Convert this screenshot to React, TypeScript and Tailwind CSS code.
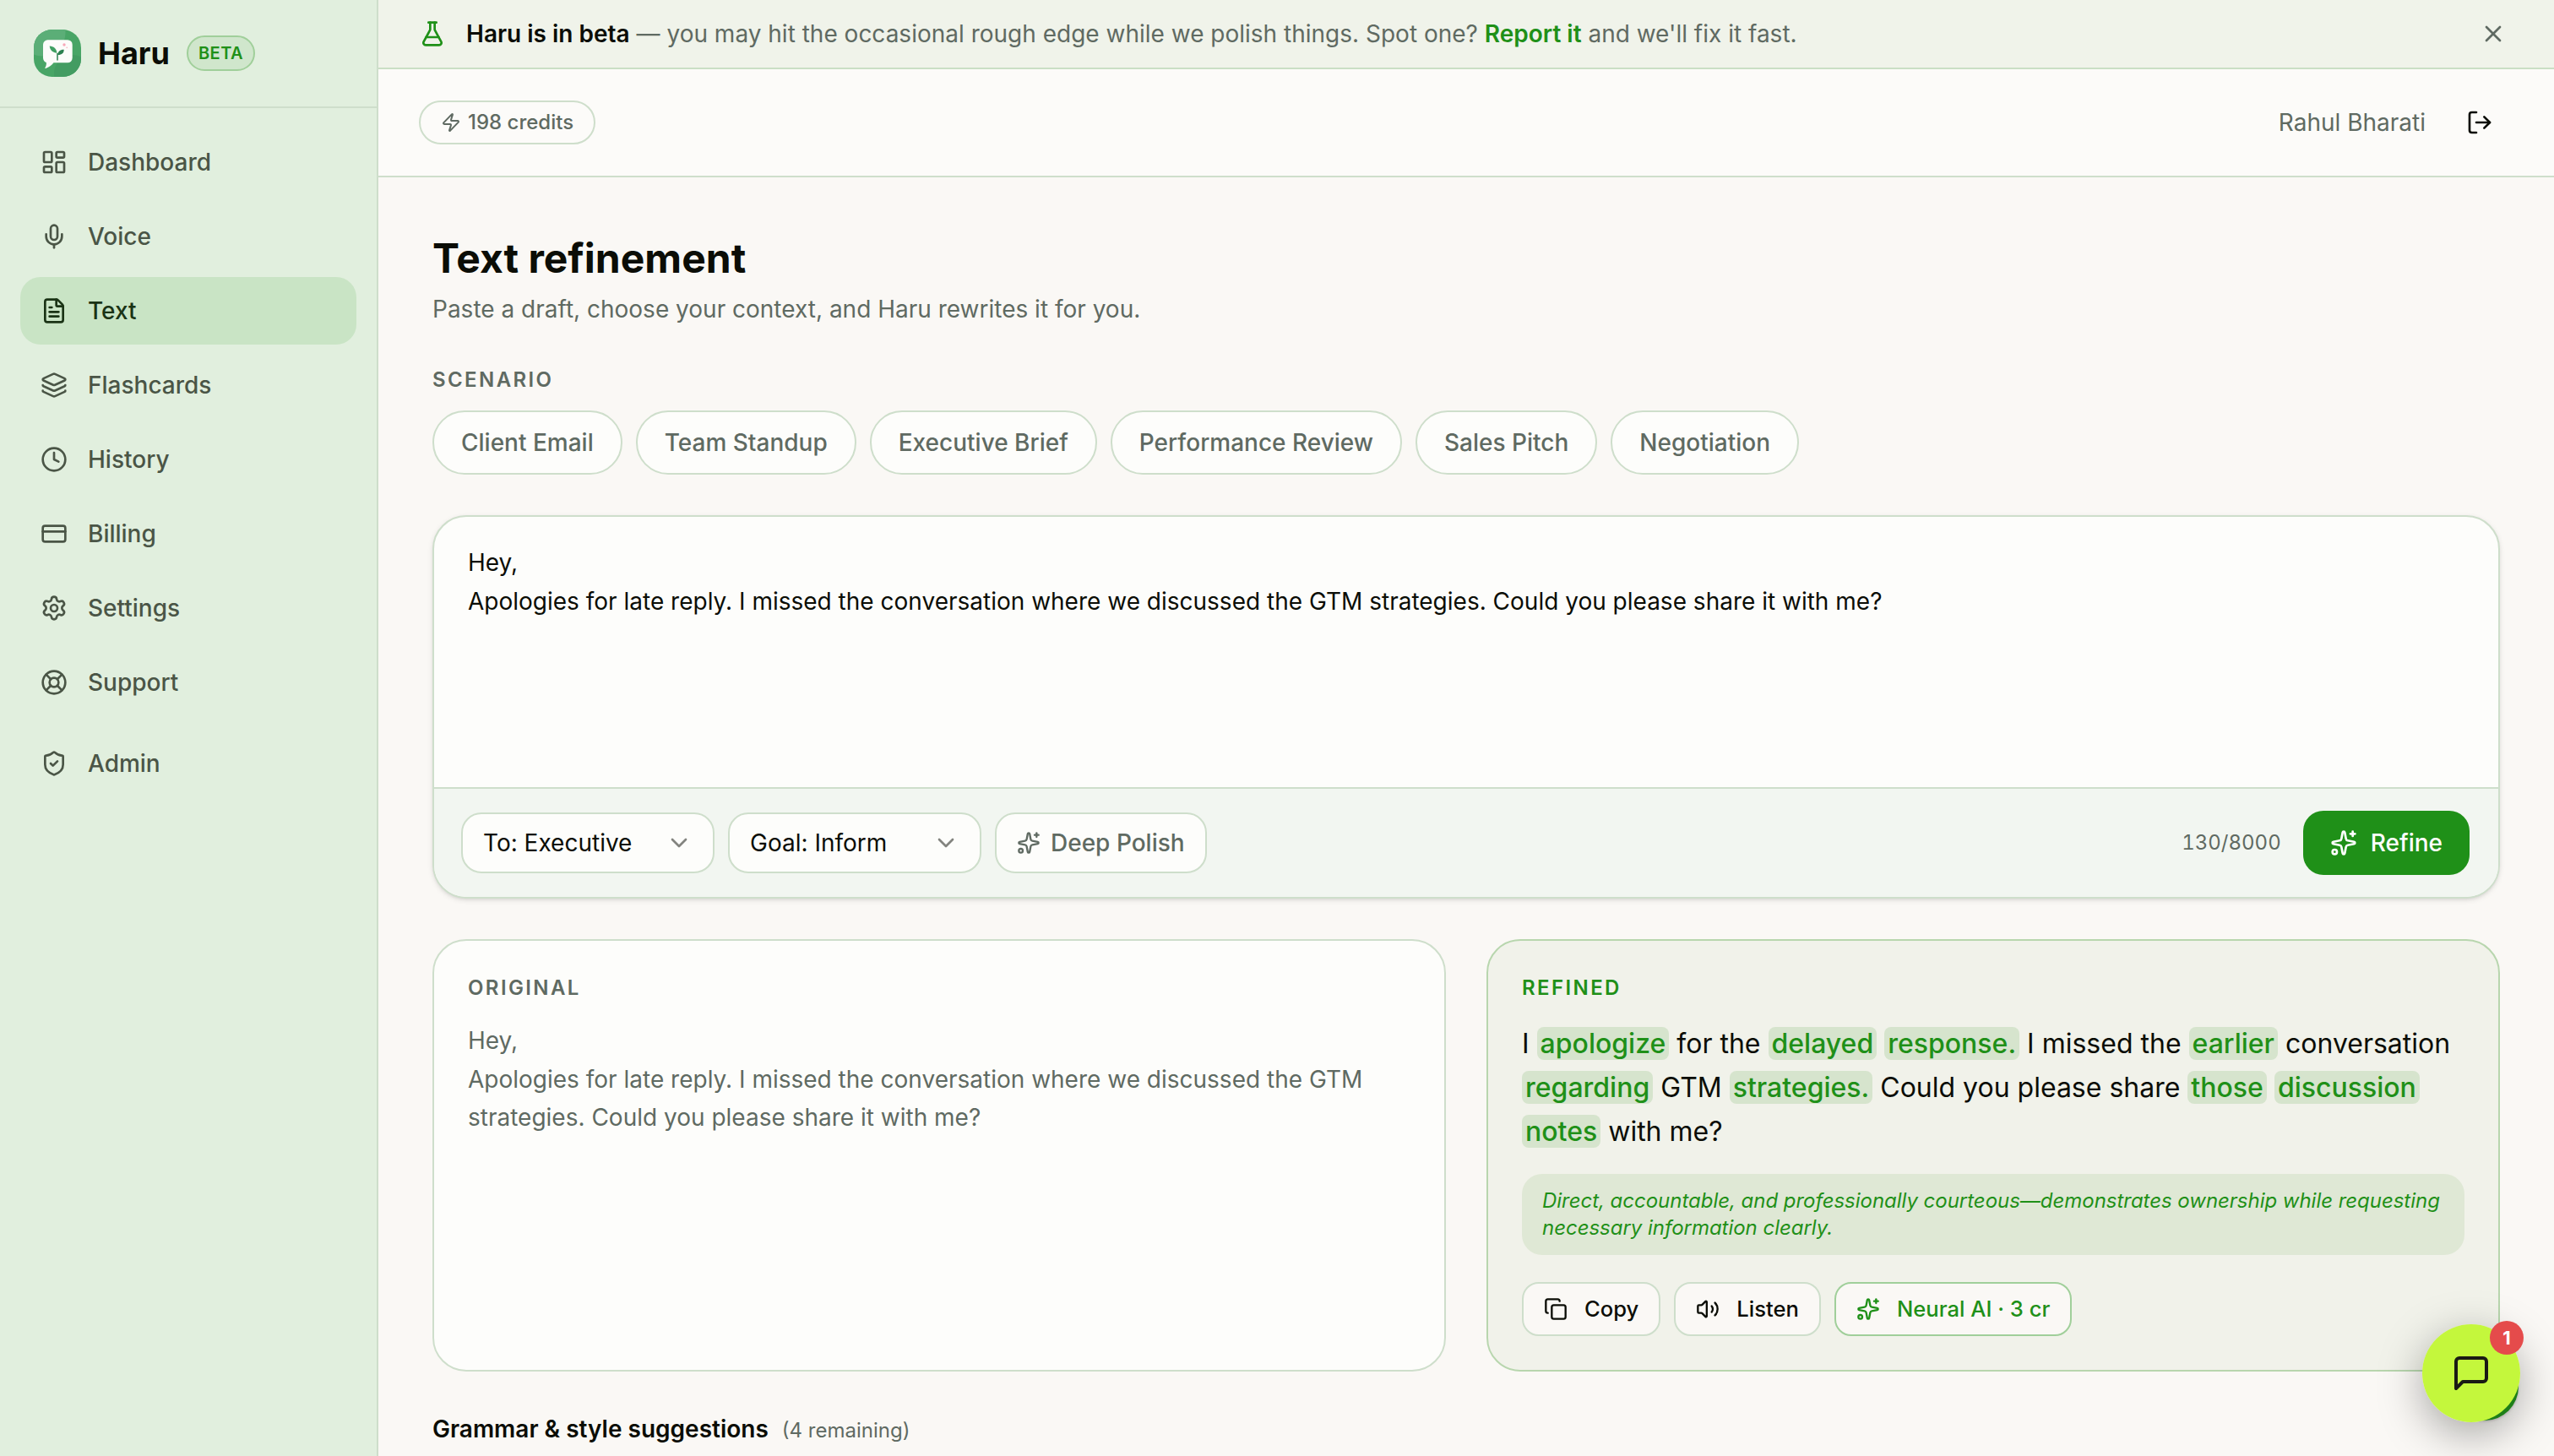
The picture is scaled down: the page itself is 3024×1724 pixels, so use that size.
import {
  Clock,
  Copy,
  ChevronDown,
  CreditCard,
  FileText,
  FlaskConical,
  Layers,
  LayoutDashboard,
  LifeBuoy,
  LogOut,
  Mic,
  Settings,
  ShieldCheck,
  Sparkles,
  Volume2,
  X,
  Zap,
  type LucideIcon,
} from "lucide-react";
import { clsx } from "clsx";

const NAV: { label: string; icon: LucideIcon; active?: boolean; spaced?: boolean }[] = [
  { label: "Dashboard", icon: LayoutDashboard },
  { label: "Voice", icon: Mic },
  { label: "Text", icon: FileText, active: true },
  { label: "Flashcards", icon: Layers },
  { label: "History", icon: Clock },
  { label: "Billing", icon: CreditCard },
  { label: "Settings", icon: Settings },
  { label: "Support", icon: LifeBuoy },
  { label: "Admin", icon: ShieldCheck, spaced: true },
];

const SCENARIOS = [
  "Client Email",
  "Team Standup",
  "Executive Brief",
  "Performance Review",
  "Sales Pitch",
  "Negotiation",
];

const DRAFT =
  "Hey,\nApologies for late reply. I missed the conversation where we discussed the GTM strategies. Could you please share it with me?";

// Words starting with * were changed by the rewrite
const REFINED =
  "I *apologize for the *delayed *response. I missed the *earlier conversation *regarding GTM *strategies. Could you please share *those *discussion *notes with me?";

/** Speech bubble with a sprout on a green tile. */
function Logo() {
  return (
    <svg viewBox="0 0 56 56" className="size-14">
      <clipPath id="logo-tile">
        <rect width="56" height="56" rx="21.5" />
      </clipPath>
      <g clipPath="url(#logo-tile)">
        <rect width="56" height="56" fill="#48a566" />
        <circle cx="10" cy="4" r="27.5" fill="#5bae77" />
        <circle cx="46" cy="52" r="22" fill="#439c62" />
      </g>
      <path
        d="M16.500 12.200H40a5.700 5.700 0 0 1 5.700 5.700v15.700a5.700 5.700 0 0 1-5.700 5.700H23.500c-2.400 3-5.600 5.400-9.400 6.700-.6.2-1-.3-.7-.8 1.200-1.900 1.700-4 1.400-6.200-2.300-.7-3.800-2.800-3.800-5.400V17.900a5.700 5.700 0 0 1 5.500-5.700Z"
        fill="#fcfcfa"
      />
      <path d="M28 36v-7.5" stroke="#2c8050" strokeWidth="1.5" strokeLinecap="round" />
      <path d="M18.700 19.500c4.800.2 8.300 3 8.700 8.300-4.700-.5-8.200-3-8.700-8.300Z" fill="#3f9f62" />
      <path d="M35.700 23.800c.2 3.900-2.700 6.500-7.400 6.300-.1-3.900 2.800-6.400 7.400-6.300Z" fill="#2c8050" />
      <circle cx="36" cy="18" r="1.7" fill="#f7a8b8" />
      <circle cx="39.2" cy="21.3" r=".9" fill="#f9bcc8" />
    </svg>
  );
}

function Sidebar() {
  return (
    <aside className="flex w-[448px] shrink-0 flex-col border-r-2 border-[#cedecb] bg-[#e1efde]">
      <div className="flex h-32 items-center border-b-2 border-[#cedecb] px-10">
        <Logo />
        <span className="ml-5 text-[36px] font-bold">Haru</span>
        <span className="ml-5 rounded-full border-2 border-[#a0cf9a] bg-[#d0e6cc] px-3 py-1 text-[20px] leading-[30px] font-semibold tracking-wide text-[#1f9018]">
          BETA
        </span>
      </div>
      <nav className="flex flex-col gap-2 p-6">
        {NAV.map(({ label, icon: Icon, active, spaced }) => (
          <a
            key={label}
            className={clsx(
              "flex h-20 items-center gap-6 rounded-[24px] px-6 font-medium",
              active ? "bg-[#c9e4c5] text-[#1a3315]" : "text-[#4a5546]",
              spaced && "mt-2",
            )}
          >
            <Icon size={32} />
            {label}
          </a>
        ))}
      </nav>
    </aside>
  );
}

function BetaBanner() {
  return (
    <div className="flex h-[82px] items-center border-b-2 border-[#cadfc5] bg-[#f0f3ea] px-12">
      <FlaskConical size={32} className="text-[#1f9018]" />
      <p className="ml-6 flex-1 text-[#5f6a62]">
        <strong className="font-semibold text-[#0b0d06]">Haru is in beta</strong> — you may hit the
        occasional rough edge while we polish things. Spot one?{" "}
        <a className="font-semibold text-[#1f9018]">Report it</a> and we'll fix it fast.
      </p>
      <button className="p-2 text-[#5f6a62]">
        <X size={32} />
      </button>
    </div>
  );
}

function TopBar() {
  return (
    <header className="flex h-32 items-center justify-between border-b-2 border-[#cedecb] bg-[#fcfbf9] px-12">
      <span className="flex items-center gap-2 rounded-full border-2 border-[#cedecb] px-6 py-2 text-[24px] leading-8 font-medium text-[#5f6a62]">
        <Zap size={24} />
        198 credits
      </span>
      <div className="flex items-center gap-6">
        <span className="text-[#5f6a62]">Rahul Bharati</span>
        <button className="px-6">
          <LogOut size={32} />
        </button>
      </div>
    </header>
  );
}

function Select({ value }: { value: string }) {
  return (
    <button className="flex h-[72px] w-[300px] items-center justify-between rounded-[24px] border-2 border-[#cedecb] bg-[#fdfdfb] px-6">
      {value}
      <ChevronDown size={32} className="opacity-50" />
    </button>
  );
}

function Composer() {
  return (
    <section className="mt-12 overflow-hidden rounded-[40px] border-2 border-[#cedecb] bg-[#fdfdfb] shadow-[0_2px_6px_rgba(0,0,0,0.1),0_2px_4px_-2px_rgba(0,0,0,0.1)]">
      <div className="h-80 px-10 py-8 leading-[45.5px] whitespace-pre-line">{DRAFT}</div>
      <div className="flex h-[130px] items-center gap-4 border-t-2 border-[#cedecb] bg-[#f2f6f1] pr-[34px] pl-8">
        <Select value="To: Executive" />
        <Select value="Goal: Inform" />
        <button className="flex h-[72px] items-center gap-3 rounded-[24px] border-2 border-[#cedecb] bg-[#fdfdfb] px-6 font-medium text-[#5f6a62]">
          <Sparkles size={28} />
          Deep Polish
        </button>
        <span className="ml-auto text-[24px] text-[#5f6a62] tabular-nums">130/8000</span>
        <button className="ml-2.5 flex h-[76px] items-center gap-4 rounded-[24px] bg-[#1f9018] px-8 font-medium text-white">
          <Sparkles size={32} />
          Refine
        </button>
      </div>
    </section>
  );
}

function RefinedText() {
  return (
    <p className="mt-6 text-[32px] leading-[52px]">
      {REFINED.split(" ").map((word, i) => (
        <span key={i}>
          {word.startsWith("*") ? (
            <mark className="rounded-lg bg-[#d6e4cd] px-1 font-medium text-[#1f9018]">{word.slice(1)}</mark>
          ) : (
            word
          )}{" "}
        </span>
      ))}
    </p>
  );
}

const ACTION =
  "flex h-16 items-center gap-5 rounded-[20px] border-2 bg-[#faf8f5] px-6 text-[25.6px] font-medium";

function Results() {
  return (
    <div className="mt-12 grid grid-cols-2 gap-12">
      <section className="rounded-[40px] border-2 border-[#cedecb] bg-[#fdfdfb] p-10 text-[#5f6a62]">
        <h2 className="text-[24px] leading-8 font-semibold tracking-widest">ORIGINAL</h2>
        <p className="mt-6 leading-[45.5px] whitespace-pre-line">{DRAFT}</p>
      </section>
      <section className="rounded-[40px] border-2 border-[#b8d6ae] bg-[#f1f2ea] p-10">
        <h2 className="text-[24px] leading-8 font-semibold tracking-widest text-[#1f9018]">REFINED</h2>
        <RefinedText />
        <p className="mt-6 rounded-[24px] bg-[#dfe8d5] px-6 py-4 text-[24px] leading-8 tracking-[-0.03px] text-[#1f9018] italic">
          Direct, accountable, and professionally courteous—demonstrates ownership while requesting
          necessary information clearly.
        </p>
        <div className="mt-8 flex gap-4">
          <button className={clsx(ACTION, "border-[#cedecb]")}>
            <Copy size={28} />
            Copy
          </button>
          <button className={clsx(ACTION, "border-[#cedecb]")}>
            <Volume2 size={28} />
            Listen
          </button>
          <button className={clsx(ACTION, "border-[#a0cf9a] text-[#1f9018]")}>
            <Sparkles size={28} />
            Neural AI · 3 cr
          </button>
        </div>
      </section>
    </div>
  );
}

function ChatWidget() {
  return (
    <div className="absolute right-10 bottom-10 size-[116px] rounded-full shadow-[0_14px_52px_rgba(0,0,0,0.34)]">
      {/* launcher underneath, only its lower right edge shows */}
      <div className="absolute right-0.5 bottom-0.5 size-20 rounded-full bg-[#1d7f18] shadow-[0_1px_3px_rgba(0,0,0,0.2)]" />
      <button className="relative flex size-full items-center justify-center rounded-full bg-[#c4f73c] text-[#1a1a14]">
        <svg
          viewBox="0 0 24 24"
          className="size-12"
          fill="none"
          stroke="currentColor"
          strokeWidth="2"
          strokeLinecap="round"
          strokeLinejoin="round"
        >
          <path d="M21 15a2 2 0 0 1-2 2H7l-4 4V5a2 2 0 0 1 2-2h14a2 2 0 0 1 2 2z" />
        </svg>
      </button>
      <span className="absolute -top-1 -right-1 flex size-10 items-center justify-center rounded-full bg-[#e54b4b] text-[22px] font-bold text-white">
        1
      </span>
    </div>
  );
}

export default function App() {
  return (
    <div className="relative flex h-[1724px] w-[3024px] overflow-hidden bg-[#faf8f5] font-['Inter',sans-serif] text-[28px] leading-10 text-[#0b0d06]">
      <Sidebar />
      <div className="flex flex-1 flex-col">
        <BetaBanner />
        <TopBar />
        <main className="flex-1 px-16 pt-16">
          <h1 className="text-[48px] leading-[64px] font-bold">Text refinement</h1>
          <p className="mt-2 text-[#5f6a62]">Paste a draft, choose your context, and Haru rewrites it for you.</p>
          <h2 className="mt-12 text-[24px] leading-8 font-semibold tracking-widest text-[#5f6a62]">SCENARIO</h2>
          <div className="mt-5 flex gap-4">
            {SCENARIOS.map((name) => (
              <button
                key={name}
                className="rounded-full border-2 border-[#cedecb] bg-[#fdfdfb] px-8 py-4 font-medium text-[#5f6a62]"
              >
                {name}
              </button>
            ))}
          </div>
          <Composer />
          <Results />
          <div className="mt-12 flex items-baseline gap-4">
            <h2 className="font-semibold">Grammar &amp; style suggestions</h2>
            <span className="text-[24px] text-[#5f6a62]">(4 remaining)</span>
          </div>
        </main>
      </div>
      <ChatWidget />
    </div>
  );
}
